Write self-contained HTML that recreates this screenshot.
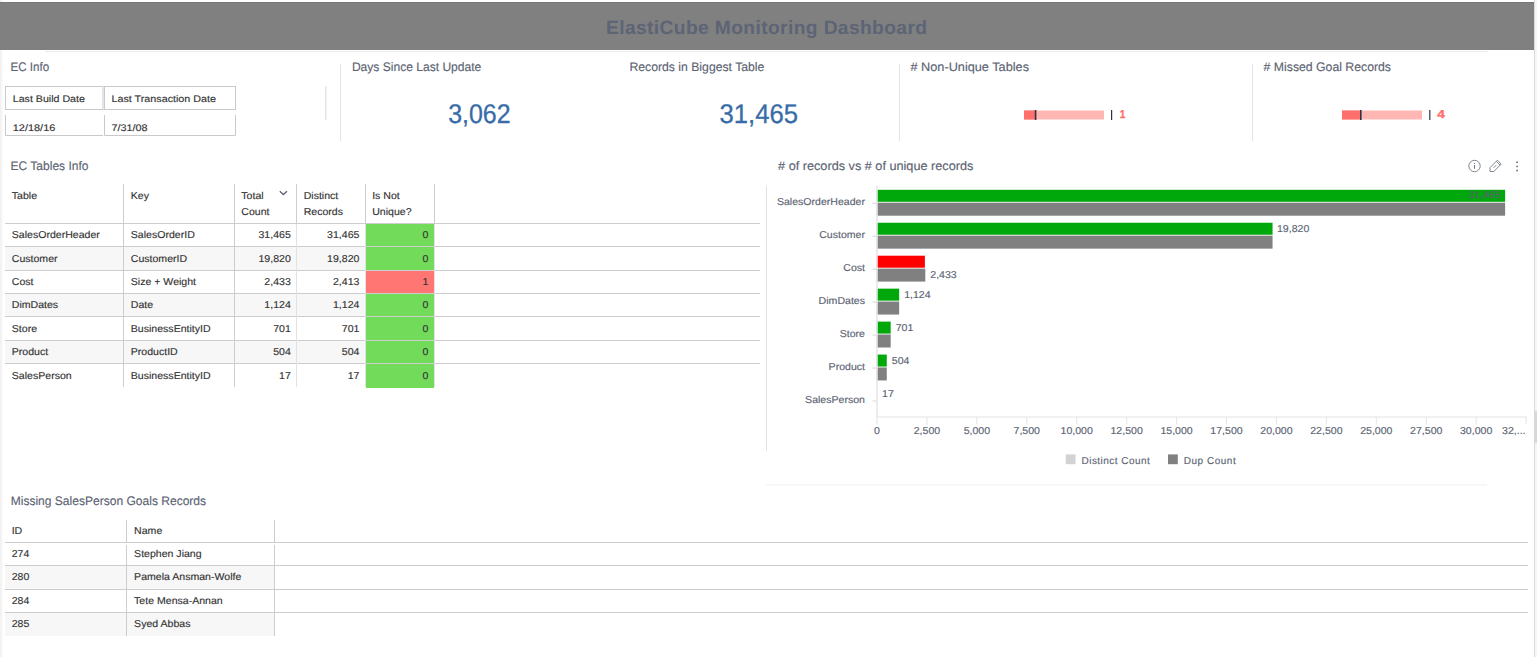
<!DOCTYPE html>
<html><head><meta charset="utf-8"><title>ElastiCube Monitoring Dashboard</title>
<style>
html,body{margin:0;padding:0;background:#fff;width:1537px;height:657px;overflow:hidden}
svg{display:block;font-family:"Liberation Sans",sans-serif;text-rendering:geometricPrecision}
</style></head><body>
<svg width="1537" height="657" viewBox="0 0 1537 657">
<defs><linearGradient id="lsh" x1="0" x2="1" y1="0" y2="0"><stop offset="0" stop-color="#efefef"/><stop offset="1" stop-color="#ffffff"/></linearGradient></defs>
<rect x="0" y="0" width="3.5" height="657" fill="url(#lsh)" />
<rect x="1535" y="0" width="2" height="657" fill="#f6f6f6" />
<rect x="1534" y="0" width="1" height="657" fill="#d9d9d9" />
<rect x="1535" y="411" width="2" height="32" fill="#d8d8d8" />
<rect x="0" y="2" width="1534" height="48" fill="#808080" />
<rect x="0" y="2" width="1534" height="1" fill="#767676" />
<text x="766.5" y="34" font-size="19.2" fill="#5c6475" text-anchor="middle" font-weight="bold" textLength="321" lengthAdjust="spacing" >ElastiCube Monitoring Dashboard</text>
<rect x="45" y="51" width="1443" height="1" fill="#ececec" />
<text x="10.5" y="71" font-size="12.4" fill="#5b6372" textLength="38.7" lengthAdjust="spacingAndGlyphs" stroke="#5b6372" stroke-width="0.14" >EC Info</text>
<rect x="5.5" y="86.5" width="97.5" height="23" fill="none" stroke="#c9c9c9" stroke-width="1"/>
<rect x="104.5" y="86.5" width="131" height="23" fill="none" stroke="#c9c9c9" stroke-width="1"/>
<path d="M5.5 115 V135.5 H103 M104.5 115 V135.5 H235.5 V115" fill="none" stroke="#c9c9c9" stroke-width="1"/>
<text x="12.8" y="102" font-size="9.6" fill="#333333" textLength="72.1" lengthAdjust="spacingAndGlyphs" stroke="#333333" stroke-width="0.14" >Last Build Date</text>
<text x="111.5" y="102" font-size="9.6" fill="#333333" textLength="104.5" lengthAdjust="spacingAndGlyphs" stroke="#333333" stroke-width="0.14" >Last Transaction Date</text>
<text x="12.8" y="130.5" font-size="9.6" fill="#333333" textLength="42.5" lengthAdjust="spacingAndGlyphs" stroke="#333333" stroke-width="0.14" >12/18/16</text>
<text x="111.5" y="130.5" font-size="9.6" fill="#333333" textLength="36" lengthAdjust="spacingAndGlyphs" stroke="#333333" stroke-width="0.14" >7/31/08</text>
<rect x="325" y="86" width="1.5" height="34" fill="#e6e6e6" />
<rect x="340" y="64" width="1" height="77" fill="#e3e3e3" />
<text x="351.9" y="70.8" font-size="12.4" fill="#5b6372" textLength="129.4" lengthAdjust="spacingAndGlyphs" stroke="#5b6372" stroke-width="0.14" >Days Since Last Update</text>
<text x="448.2" y="122.9" font-size="27" fill="#376ca8" textLength="62.4" lengthAdjust="spacingAndGlyphs" stroke="#376ca8" stroke-width="0.3">3,062</text>
<text x="629.4" y="70.8" font-size="12.4" fill="#5b6372" textLength="135" lengthAdjust="spacingAndGlyphs" stroke="#5b6372" stroke-width="0.14" >Records in Biggest Table</text>
<text x="719.5" y="122.9" font-size="27" fill="#376ca8" textLength="78.5" lengthAdjust="spacingAndGlyphs" stroke="#376ca8" stroke-width="0.3">31,465</text>
<rect x="899" y="64" width="1" height="77" fill="#e3e3e3" />
<text x="910.5" y="70.8" font-size="12.4" fill="#5b6372" textLength="118.5" lengthAdjust="spacingAndGlyphs" stroke="#5b6372" stroke-width="0.14" ># Non-Unique Tables</text>
<rect x="1252" y="64" width="1" height="77" fill="#e3e3e3" />
<text x="1263.6" y="70.8" font-size="12.4" fill="#5b6372" textLength="127.4" lengthAdjust="spacingAndGlyphs" stroke="#5b6372" stroke-width="0.14" ># Missed Goal Records</text>
<rect x="1024" y="110.5" width="80" height="9" fill="#ffb7b4" />
<rect x="1024" y="110.5" width="11.299999999999955" height="9" fill="#ff6f6b" />
<rect x="1034.8" y="110" width="1.6" height="10" fill="#2e3340" />
<rect x="1111.0" y="110" width="1.2" height="10" fill="#2e3340" />
<text x="1119.8" y="118" font-size="11.5" fill="#ff6f6b" font-weight="bold" textLength="5.6" lengthAdjust="spacingAndGlyphs" stroke="#ff6f6b" stroke-width="0.35">1</text>
<rect x="1342" y="110.5" width="80" height="9" fill="#ffb7b4" />
<rect x="1342" y="110.5" width="18.5" height="9" fill="#ff6f6b" />
<rect x="1360.0" y="110" width="1.6" height="10" fill="#2e3340" />
<rect x="1429.2" y="110" width="1.2" height="10" fill="#2e3340" />
<text x="1437.3" y="118" font-size="11.5" fill="#ff6f6b" font-weight="bold" textLength="7.6" lengthAdjust="spacingAndGlyphs" stroke="#ff6f6b" stroke-width="0.35">4</text>
<text x="10.6" y="170" font-size="12.4" fill="#5b6372" textLength="77.8" lengthAdjust="spacingAndGlyphs" stroke="#5b6372" stroke-width="0.14" >EC Tables Info</text>
<rect x="366" y="224" width="68" height="22" fill="#72dc5a" />
<rect x="5" y="247" width="430" height="23" fill="#f7f7f7" />
<rect x="366" y="247" width="68" height="23" fill="#72dc5a" />
<rect x="366" y="271" width="68" height="22" fill="#ff7672" />
<rect x="5" y="294" width="430" height="22" fill="#f7f7f7" />
<rect x="366" y="294" width="68" height="22" fill="#72dc5a" />
<rect x="366" y="317" width="68" height="23" fill="#72dc5a" />
<rect x="5" y="341" width="430" height="22" fill="#f7f7f7" />
<rect x="366" y="341" width="68" height="22" fill="#72dc5a" />
<rect x="366" y="364" width="68" height="24" fill="#72dc5a" />
<rect x="5" y="223" width="755" height="1" fill="#cdcdcd" />
<rect x="5" y="246" width="755" height="1" fill="#cdcdcd" />
<rect x="5" y="270" width="755" height="1" fill="#cdcdcd" />
<rect x="5" y="293" width="755" height="1" fill="#cdcdcd" />
<rect x="5" y="316" width="755" height="1" fill="#cdcdcd" />
<rect x="5" y="340" width="755" height="1" fill="#cdcdcd" />
<rect x="5" y="363" width="755" height="1" fill="#cdcdcd" />
<rect x="123" y="184" width="1" height="203" fill="#cdcdcd" />
<rect x="234" y="184" width="1" height="203" fill="#cdcdcd" />
<rect x="296" y="184" width="1" height="39" fill="#cdcdcd" />
<rect x="296" y="224" width="1" height="163" fill="#e2e2e2" />
<rect x="365" y="184" width="1" height="39" fill="#cdcdcd" />
<rect x="365" y="224" width="1" height="163" fill="#e4e0e8" />
<rect x="434" y="184" width="1" height="39" fill="#cdcdcd" />
<rect x="434" y="224" width="1" height="163" fill="#e4e0e8" />
<text x="11.8" y="199" font-size="10" fill="#333333" textLength="25.25" lengthAdjust="spacingAndGlyphs" stroke="#333333" stroke-width="0.14" >Table</text>
<text x="130.8" y="199" font-size="10" fill="#333333" textLength="18.2" lengthAdjust="spacingAndGlyphs" stroke="#333333" stroke-width="0.14" >Key</text>
<text x="241.3" y="199.2" font-size="10" fill="#333333" textLength="22.31" lengthAdjust="spacingAndGlyphs" stroke="#333333" stroke-width="0.14" >Total</text>
<text x="241.3" y="215" font-size="10" fill="#333333" textLength="28.18" lengthAdjust="spacingAndGlyphs" stroke="#333333" stroke-width="0.14" >Count</text>
<text x="303.7" y="199.2" font-size="10" fill="#333333" textLength="34.62" lengthAdjust="spacingAndGlyphs" stroke="#333333" stroke-width="0.14" >Distinct</text>
<text x="303.7" y="215" font-size="10" fill="#333333" textLength="39.32" lengthAdjust="spacingAndGlyphs" stroke="#333333" stroke-width="0.14" >Records</text>
<text x="372.2" y="199.2" font-size="10" fill="#333333" textLength="27.58" lengthAdjust="spacingAndGlyphs" stroke="#333333" stroke-width="0.14" >Is Not</text>
<text x="372.2" y="215" font-size="10" fill="#333333" textLength="39.34" lengthAdjust="spacingAndGlyphs" stroke="#333333" stroke-width="0.14" >Unique?</text>
<path d="M279.8 191.3 L283.4 194.6 L287 191.3" fill="none" stroke="#5f6674" stroke-width="1.4"/>
<text x="11.8" y="238" font-size="10" fill="#333333" textLength="88.05" lengthAdjust="spacingAndGlyphs" stroke="#333333" stroke-width="0.14" >SalesOrderHeader</text>
<text x="130.8" y="238" font-size="10" fill="#333333" textLength="63.97" lengthAdjust="spacingAndGlyphs" stroke="#333333" stroke-width="0.14" >SalesOrderID</text>
<text x="290.8" y="238" font-size="10" fill="#333333" text-anchor="end" textLength="32.3" lengthAdjust="spacingAndGlyphs" stroke="#333333" stroke-width="0.14" >31,465</text>
<text x="359.4" y="238" font-size="10" fill="#333333" text-anchor="end" textLength="32.3" lengthAdjust="spacingAndGlyphs" stroke="#333333" stroke-width="0.14" >31,465</text>
<text x="428.3" y="238" font-size="10" fill="#333333" text-anchor="end" textLength="5.87" lengthAdjust="spacingAndGlyphs" stroke="#333333" stroke-width="0.14" >0</text>
<text x="11.8" y="262" font-size="10" fill="#333333" textLength="45.77" lengthAdjust="spacingAndGlyphs" stroke="#333333" stroke-width="0.14" >Customer</text>
<text x="130.8" y="262" font-size="10" fill="#333333" textLength="56.33" lengthAdjust="spacingAndGlyphs" stroke="#333333" stroke-width="0.14" >CustomerID</text>
<text x="290.8" y="262" font-size="10" fill="#333333" text-anchor="end" textLength="32.3" lengthAdjust="spacingAndGlyphs" stroke="#333333" stroke-width="0.14" >19,820</text>
<text x="359.4" y="262" font-size="10" fill="#333333" text-anchor="end" textLength="32.3" lengthAdjust="spacingAndGlyphs" stroke="#333333" stroke-width="0.14" >19,820</text>
<text x="428.3" y="262" font-size="10" fill="#333333" text-anchor="end" textLength="5.87" lengthAdjust="spacingAndGlyphs" stroke="#333333" stroke-width="0.14" >0</text>
<text x="11.8" y="285.2" font-size="10" fill="#333333" textLength="21.71" lengthAdjust="spacingAndGlyphs" stroke="#333333" stroke-width="0.14" >Cost</text>
<text x="130.8" y="285.2" font-size="10" fill="#333333" textLength="65.25" lengthAdjust="spacingAndGlyphs" stroke="#333333" stroke-width="0.14" >Size + Weight</text>
<text x="290.8" y="285.2" font-size="10" fill="#333333" text-anchor="end" textLength="26.43" lengthAdjust="spacingAndGlyphs" stroke="#333333" stroke-width="0.14" >2,433</text>
<text x="359.4" y="285.2" font-size="10" fill="#333333" text-anchor="end" textLength="26.43" lengthAdjust="spacingAndGlyphs" stroke="#333333" stroke-width="0.14" >2,413</text>
<text x="428.3" y="285.2" font-size="10" fill="#333333" text-anchor="end" textLength="5.87" lengthAdjust="spacingAndGlyphs" stroke="#333333" stroke-width="0.14" >1</text>
<text x="11.8" y="308" font-size="10" fill="#333333" textLength="46.36" lengthAdjust="spacingAndGlyphs" stroke="#333333" stroke-width="0.14" >DimDates</text>
<text x="130.8" y="308" font-size="10" fill="#333333" textLength="22.31" lengthAdjust="spacingAndGlyphs" stroke="#333333" stroke-width="0.14" >Date</text>
<text x="290.8" y="308" font-size="10" fill="#333333" text-anchor="end" textLength="26.43" lengthAdjust="spacingAndGlyphs" stroke="#333333" stroke-width="0.14" >1,124</text>
<text x="359.4" y="308" font-size="10" fill="#333333" text-anchor="end" textLength="26.43" lengthAdjust="spacingAndGlyphs" stroke="#333333" stroke-width="0.14" >1,124</text>
<text x="428.3" y="308" font-size="10" fill="#333333" text-anchor="end" textLength="5.87" lengthAdjust="spacingAndGlyphs" stroke="#333333" stroke-width="0.14" >0</text>
<text x="11.8" y="332" font-size="10" fill="#333333" textLength="25.24" lengthAdjust="spacingAndGlyphs" stroke="#333333" stroke-width="0.14" >Store</text>
<text x="130.8" y="332" font-size="10" fill="#333333" textLength="79.82" lengthAdjust="spacingAndGlyphs" stroke="#333333" stroke-width="0.14" >BusinessEntityID</text>
<text x="290.8" y="332" font-size="10" fill="#333333" text-anchor="end" textLength="17.62" lengthAdjust="spacingAndGlyphs" stroke="#333333" stroke-width="0.14" >701</text>
<text x="359.4" y="332" font-size="10" fill="#333333" text-anchor="end" textLength="17.62" lengthAdjust="spacingAndGlyphs" stroke="#333333" stroke-width="0.14" >701</text>
<text x="428.3" y="332" font-size="10" fill="#333333" text-anchor="end" textLength="5.87" lengthAdjust="spacingAndGlyphs" stroke="#333333" stroke-width="0.14" >0</text>
<text x="11.8" y="354.8" font-size="10" fill="#333333" textLength="36.39" lengthAdjust="spacingAndGlyphs" stroke="#333333" stroke-width="0.14" >Product</text>
<text x="130.8" y="354.8" font-size="10" fill="#333333" textLength="46.95" lengthAdjust="spacingAndGlyphs" stroke="#333333" stroke-width="0.14" >ProductID</text>
<text x="290.8" y="354.8" font-size="10" fill="#333333" text-anchor="end" textLength="17.62" lengthAdjust="spacingAndGlyphs" stroke="#333333" stroke-width="0.14" >504</text>
<text x="359.4" y="354.8" font-size="10" fill="#333333" text-anchor="end" textLength="17.62" lengthAdjust="spacingAndGlyphs" stroke="#333333" stroke-width="0.14" >504</text>
<text x="428.3" y="354.8" font-size="10" fill="#333333" text-anchor="end" textLength="5.87" lengthAdjust="spacingAndGlyphs" stroke="#333333" stroke-width="0.14" >0</text>
<text x="11.8" y="379" font-size="10" fill="#333333" textLength="59.88" lengthAdjust="spacingAndGlyphs" stroke="#333333" stroke-width="0.14" >SalesPerson</text>
<text x="130.8" y="379" font-size="10" fill="#333333" textLength="79.82" lengthAdjust="spacingAndGlyphs" stroke="#333333" stroke-width="0.14" >BusinessEntityID</text>
<text x="290.8" y="379" font-size="10" fill="#333333" text-anchor="end" textLength="11.75" lengthAdjust="spacingAndGlyphs" stroke="#333333" stroke-width="0.14" >17</text>
<text x="359.4" y="379" font-size="10" fill="#333333" text-anchor="end" textLength="11.75" lengthAdjust="spacingAndGlyphs" stroke="#333333" stroke-width="0.14" >17</text>
<text x="428.3" y="379" font-size="10" fill="#333333" text-anchor="end" textLength="5.87" lengthAdjust="spacingAndGlyphs" stroke="#333333" stroke-width="0.14" >0</text>
<rect x="766" y="186" width="1" height="265" fill="#e3e3e3" />
<text x="778.1" y="169.9" font-size="12.4" fill="#5b6372" textLength="195.2" lengthAdjust="spacingAndGlyphs" stroke="#5b6372" stroke-width="0.14" ># of records vs # of unique records</text>
<circle cx="1474.5" cy="166" r="5.7" fill="none" stroke="#737a88" stroke-width="0.9"/>
<rect x="1474" y="165" width="1" height="3.8" fill="#737a88"/><rect x="1474" y="163" width="1" height="1" fill="#737a88"/>
<path d="M1490 171.5 L1490 167.6 L1497.4 160.2 L1501.2 164 L1493.8 171.5 Z M1496.3 161.3 L1500.1 165.1 M1493.6 167.8 L1496.2 165.2" fill="none" stroke="#737a88" stroke-width="0.9" stroke-linejoin="round"/>
<circle cx="1517.1" cy="162.3" r="0.95" fill="#737a88"/>
<circle cx="1517.1" cy="166.4" r="0.95" fill="#737a88"/>
<circle cx="1517.1" cy="170.5" r="0.95" fill="#737a88"/>
<rect x="876.7" y="189.8" width="628.42" height="12" fill="#00a80c" />
<rect x="876.7" y="202.7" width="628.42" height="13" fill="#808080" />
<rect x="872.5" y="202.8" width="4" height="1" fill="#d8d8d8" />
<text x="865" y="205.4" font-size="10" fill="#5b6372" text-anchor="end" textLength="88.05" lengthAdjust="spacingAndGlyphs" stroke="#5b6372" stroke-width="0.14" >SalesOrderHeader</text>
<text x="1500.6" y="197.9" font-size="10" fill="#5b6372" text-anchor="end" textLength="32.3" lengthAdjust="spacingAndGlyphs" stroke="#5b6372" stroke-width="0.14" >31,465</text>
<rect x="876.7" y="222.75" width="395.85" height="12" fill="#00a80c" />
<rect x="876.7" y="235.65" width="395.85" height="13" fill="#808080" />
<rect x="872.5" y="235.75" width="4" height="1" fill="#d8d8d8" />
<text x="865" y="238.35" font-size="10" fill="#5b6372" text-anchor="end" textLength="45.77" lengthAdjust="spacingAndGlyphs" stroke="#5b6372" stroke-width="0.14" >Customer</text>
<text x="1277" y="231.75" font-size="10" fill="#5b6372" textLength="32.3" lengthAdjust="spacingAndGlyphs" stroke="#5b6372" stroke-width="0.14" >19,820</text>
<rect x="876.7" y="255.7" width="48.19" height="12" fill="#ff0000" />
<rect x="876.7" y="268.6" width="48.59" height="13" fill="#808080" />
<rect x="872.5" y="268.7" width="4" height="1" fill="#d8d8d8" />
<text x="865" y="271.3" font-size="10" fill="#5b6372" text-anchor="end" textLength="21.71" lengthAdjust="spacingAndGlyphs" stroke="#5b6372" stroke-width="0.14" >Cost</text>
<text x="930.291876" y="278.20000000000005" font-size="10" fill="#5b6372" textLength="26.43" lengthAdjust="spacingAndGlyphs" stroke="#5b6372" stroke-width="0.14" >2,433</text>
<rect x="876.7" y="288.65" width="22.45" height="12" fill="#00a80c" />
<rect x="876.7" y="301.55" width="22.45" height="13" fill="#808080" />
<rect x="872.5" y="301.65" width="4" height="1" fill="#d8d8d8" />
<text x="865" y="304.25" font-size="10" fill="#5b6372" text-anchor="end" textLength="46.36" lengthAdjust="spacingAndGlyphs" stroke="#5b6372" stroke-width="0.14" >DimDates</text>
<text x="904.148528" y="297.65000000000003" font-size="10" fill="#5b6372" textLength="26.43" lengthAdjust="spacingAndGlyphs" stroke="#5b6372" stroke-width="0.14" >1,124</text>
<rect x="876.7" y="321.6" width="14.0" height="12" fill="#00a80c" />
<rect x="876.7" y="334.5" width="14.0" height="13" fill="#808080" />
<rect x="872.5" y="334.6" width="4" height="1" fill="#d8d8d8" />
<text x="865" y="337.2" font-size="10" fill="#5b6372" text-anchor="end" textLength="25.24" lengthAdjust="spacingAndGlyphs" stroke="#5b6372" stroke-width="0.14" >Store</text>
<text x="895.700372" y="330.6" font-size="10" fill="#5b6372" textLength="17.62" lengthAdjust="spacingAndGlyphs" stroke="#5b6372" stroke-width="0.14" >701</text>
<rect x="876.7" y="354.55" width="10.07" height="12" fill="#00a80c" />
<rect x="876.7" y="367.45" width="10.07" height="13" fill="#808080" />
<rect x="872.5" y="367.55" width="4" height="1" fill="#d8d8d8" />
<text x="865" y="370.15" font-size="10" fill="#5b6372" text-anchor="end" textLength="36.39" lengthAdjust="spacingAndGlyphs" stroke="#5b6372" stroke-width="0.14" >Product</text>
<text x="891.765888" y="363.55" font-size="10" fill="#5b6372" textLength="17.62" lengthAdjust="spacingAndGlyphs" stroke="#5b6372" stroke-width="0.14" >504</text>
<rect x="872.5" y="400.5" width="4" height="1" fill="#d8d8d8" />
<text x="865" y="403.1" font-size="10" fill="#5b6372" text-anchor="end" textLength="59.88" lengthAdjust="spacingAndGlyphs" stroke="#5b6372" stroke-width="0.14" >SalesPerson</text>
<text x="882.039524" y="396.5" font-size="10" fill="#5b6372" textLength="11.75" lengthAdjust="spacingAndGlyphs" stroke="#5b6372" stroke-width="0.14" >17</text>
<rect x="876.2" y="186" width="1.6" height="231" fill="#e6e6ea" />
<rect x="876" y="416.5" width="651" height="1" fill="#e4e4ea" />
<rect x="876.5" y="417" width="1" height="7.6" fill="#e4e4ea" />
<text x="877.0" y="433.6" font-size="10" fill="#5b6372" text-anchor="middle" textLength="5.87" lengthAdjust="spacingAndGlyphs" stroke="#5b6372" stroke-width="0.14" >0</text>
<rect x="926.43" y="417" width="1" height="7.6" fill="#e4e4ea" />
<text x="926.93" y="433.6" font-size="10" fill="#5b6372" text-anchor="middle" textLength="26.43" lengthAdjust="spacingAndGlyphs" stroke="#5b6372" stroke-width="0.14" >2,500</text>
<rect x="976.36" y="417" width="1" height="7.6" fill="#e4e4ea" />
<text x="976.86" y="433.6" font-size="10" fill="#5b6372" text-anchor="middle" textLength="26.43" lengthAdjust="spacingAndGlyphs" stroke="#5b6372" stroke-width="0.14" >5,000</text>
<rect x="1026.29" y="417" width="1" height="7.6" fill="#e4e4ea" />
<text x="1026.79" y="433.6" font-size="10" fill="#5b6372" text-anchor="middle" textLength="26.43" lengthAdjust="spacingAndGlyphs" stroke="#5b6372" stroke-width="0.14" >7,500</text>
<rect x="1076.22" y="417" width="1" height="7.6" fill="#e4e4ea" />
<text x="1076.72" y="433.6" font-size="10" fill="#5b6372" text-anchor="middle" textLength="32.3" lengthAdjust="spacingAndGlyphs" stroke="#5b6372" stroke-width="0.14" >10,000</text>
<rect x="1126.15" y="417" width="1" height="7.6" fill="#e4e4ea" />
<text x="1126.65" y="433.6" font-size="10" fill="#5b6372" text-anchor="middle" textLength="32.3" lengthAdjust="spacingAndGlyphs" stroke="#5b6372" stroke-width="0.14" >12,500</text>
<rect x="1176.08" y="417" width="1" height="7.6" fill="#e4e4ea" />
<text x="1176.58" y="433.6" font-size="10" fill="#5b6372" text-anchor="middle" textLength="32.3" lengthAdjust="spacingAndGlyphs" stroke="#5b6372" stroke-width="0.14" >15,000</text>
<rect x="1226.01" y="417" width="1" height="7.6" fill="#e4e4ea" />
<text x="1226.51" y="433.6" font-size="10" fill="#5b6372" text-anchor="middle" textLength="32.3" lengthAdjust="spacingAndGlyphs" stroke="#5b6372" stroke-width="0.14" >17,500</text>
<rect x="1275.94" y="417" width="1" height="7.6" fill="#e4e4ea" />
<text x="1276.44" y="433.6" font-size="10" fill="#5b6372" text-anchor="middle" textLength="32.3" lengthAdjust="spacingAndGlyphs" stroke="#5b6372" stroke-width="0.14" >20,000</text>
<rect x="1325.87" y="417" width="1" height="7.6" fill="#e4e4ea" />
<text x="1326.37" y="433.6" font-size="10" fill="#5b6372" text-anchor="middle" textLength="32.3" lengthAdjust="spacingAndGlyphs" stroke="#5b6372" stroke-width="0.14" >22,500</text>
<rect x="1375.8" y="417" width="1" height="7.6" fill="#e4e4ea" />
<text x="1376.3" y="433.6" font-size="10" fill="#5b6372" text-anchor="middle" textLength="32.3" lengthAdjust="spacingAndGlyphs" stroke="#5b6372" stroke-width="0.14" >25,000</text>
<rect x="1425.73" y="417" width="1" height="7.6" fill="#e4e4ea" />
<text x="1426.23" y="433.6" font-size="10" fill="#5b6372" text-anchor="middle" textLength="32.3" lengthAdjust="spacingAndGlyphs" stroke="#5b6372" stroke-width="0.14" >27,500</text>
<rect x="1475.66" y="417" width="1" height="7.6" fill="#e4e4ea" />
<text x="1476.16" y="433.6" font-size="10" fill="#5b6372" text-anchor="middle" textLength="32.3" lengthAdjust="spacingAndGlyphs" stroke="#5b6372" stroke-width="0.14" >30,000</text>
<rect x="1525.59" y="417" width="1" height="7.6" fill="#e4e4ea" />
<text x="1513.8" y="433.6" font-size="10" fill="#5b6372" text-anchor="middle" textLength="23.48" lengthAdjust="spacingAndGlyphs" stroke="#5b6372" stroke-width="0.14" >32,...</text>
<rect x="1065.7" y="454.4" width="9.8" height="9.8" fill="#d3d3d3" />
<text x="1081.5" y="464" font-size="10" fill="#5b6372" textLength="68.3" lengthAdjust="spacing" stroke="#5b6372" stroke-width="0.14" >Distinct Count</text>
<rect x="1168" y="454.4" width="9.8" height="9.8" fill="#808080" />
<text x="1183.7" y="464" font-size="10" fill="#5b6372" textLength="52" lengthAdjust="spacing" stroke="#5b6372" stroke-width="0.14" >Dup Count</text>
<rect x="766" y="484.5" width="721" height="1" fill="#efefef" />
<text x="10.7" y="504.6" font-size="12.4" fill="#5b6372" textLength="195.4" lengthAdjust="spacingAndGlyphs" stroke="#5b6372" stroke-width="0.14" >Missing SalesPerson Goals Records</text>
<rect x="5" y="566" width="270" height="23" fill="#f7f7f7" />
<rect x="5" y="613" width="270" height="23" fill="#f7f7f7" />
<rect x="5" y="542" width="1523" height="1" fill="#cdcdcd" />
<rect x="5" y="565" width="1523" height="1" fill="#cdcdcd" />
<rect x="5" y="589" width="1523" height="1" fill="#cdcdcd" />
<rect x="5" y="612" width="1523" height="1" fill="#cdcdcd" />
<rect x="126" y="520" width="1" height="22" fill="#cdcdcd" />
<rect x="126" y="545" width="1" height="91" fill="#cdcdcd" />
<rect x="274" y="520" width="1" height="22" fill="#cdcdcd" />
<rect x="274" y="545" width="1" height="91" fill="#cdcdcd" />
<text x="11.7" y="534" font-size="10" fill="#333333" textLength="10.56" lengthAdjust="spacingAndGlyphs" stroke="#333333" stroke-width="0.14" >ID</text>
<text x="134.1" y="534" font-size="10" fill="#333333" textLength="28.17" lengthAdjust="spacingAndGlyphs" stroke="#333333" stroke-width="0.14" >Name</text>
<text x="11.7" y="557.3" font-size="10" fill="#333333" textLength="17.62" lengthAdjust="spacingAndGlyphs" stroke="#333333" stroke-width="0.14" >274</text>
<text x="134.1" y="557.3" font-size="10" fill="#333333" textLength="67.52" lengthAdjust="spacingAndGlyphs" stroke="#333333" stroke-width="0.14" >Stephen Jiang</text>
<text x="11.7" y="580.3" font-size="10" fill="#333333" textLength="17.62" lengthAdjust="spacingAndGlyphs" stroke="#333333" stroke-width="0.14" >280</text>
<text x="134.1" y="580.3" font-size="10" fill="#333333" textLength="107.22" lengthAdjust="spacingAndGlyphs" stroke="#333333" stroke-width="0.14" >Pamela Ansman-Wolfe</text>
<text x="11.7" y="604.3" font-size="10" fill="#333333" textLength="17.62" lengthAdjust="spacingAndGlyphs" stroke="#333333" stroke-width="0.14" >284</text>
<text x="134.1" y="604.3" font-size="10" fill="#333333" textLength="88.64" lengthAdjust="spacingAndGlyphs" stroke="#333333" stroke-width="0.14" >Tete Mensa-Annan</text>
<text x="11.7" y="627.3" font-size="10" fill="#333333" textLength="17.62" lengthAdjust="spacingAndGlyphs" stroke="#333333" stroke-width="0.14" >285</text>
<text x="134.1" y="627.3" font-size="10" fill="#333333" textLength="56.36" lengthAdjust="spacingAndGlyphs" stroke="#333333" stroke-width="0.14" >Syed Abbas</text>
</svg>
</body></html>
